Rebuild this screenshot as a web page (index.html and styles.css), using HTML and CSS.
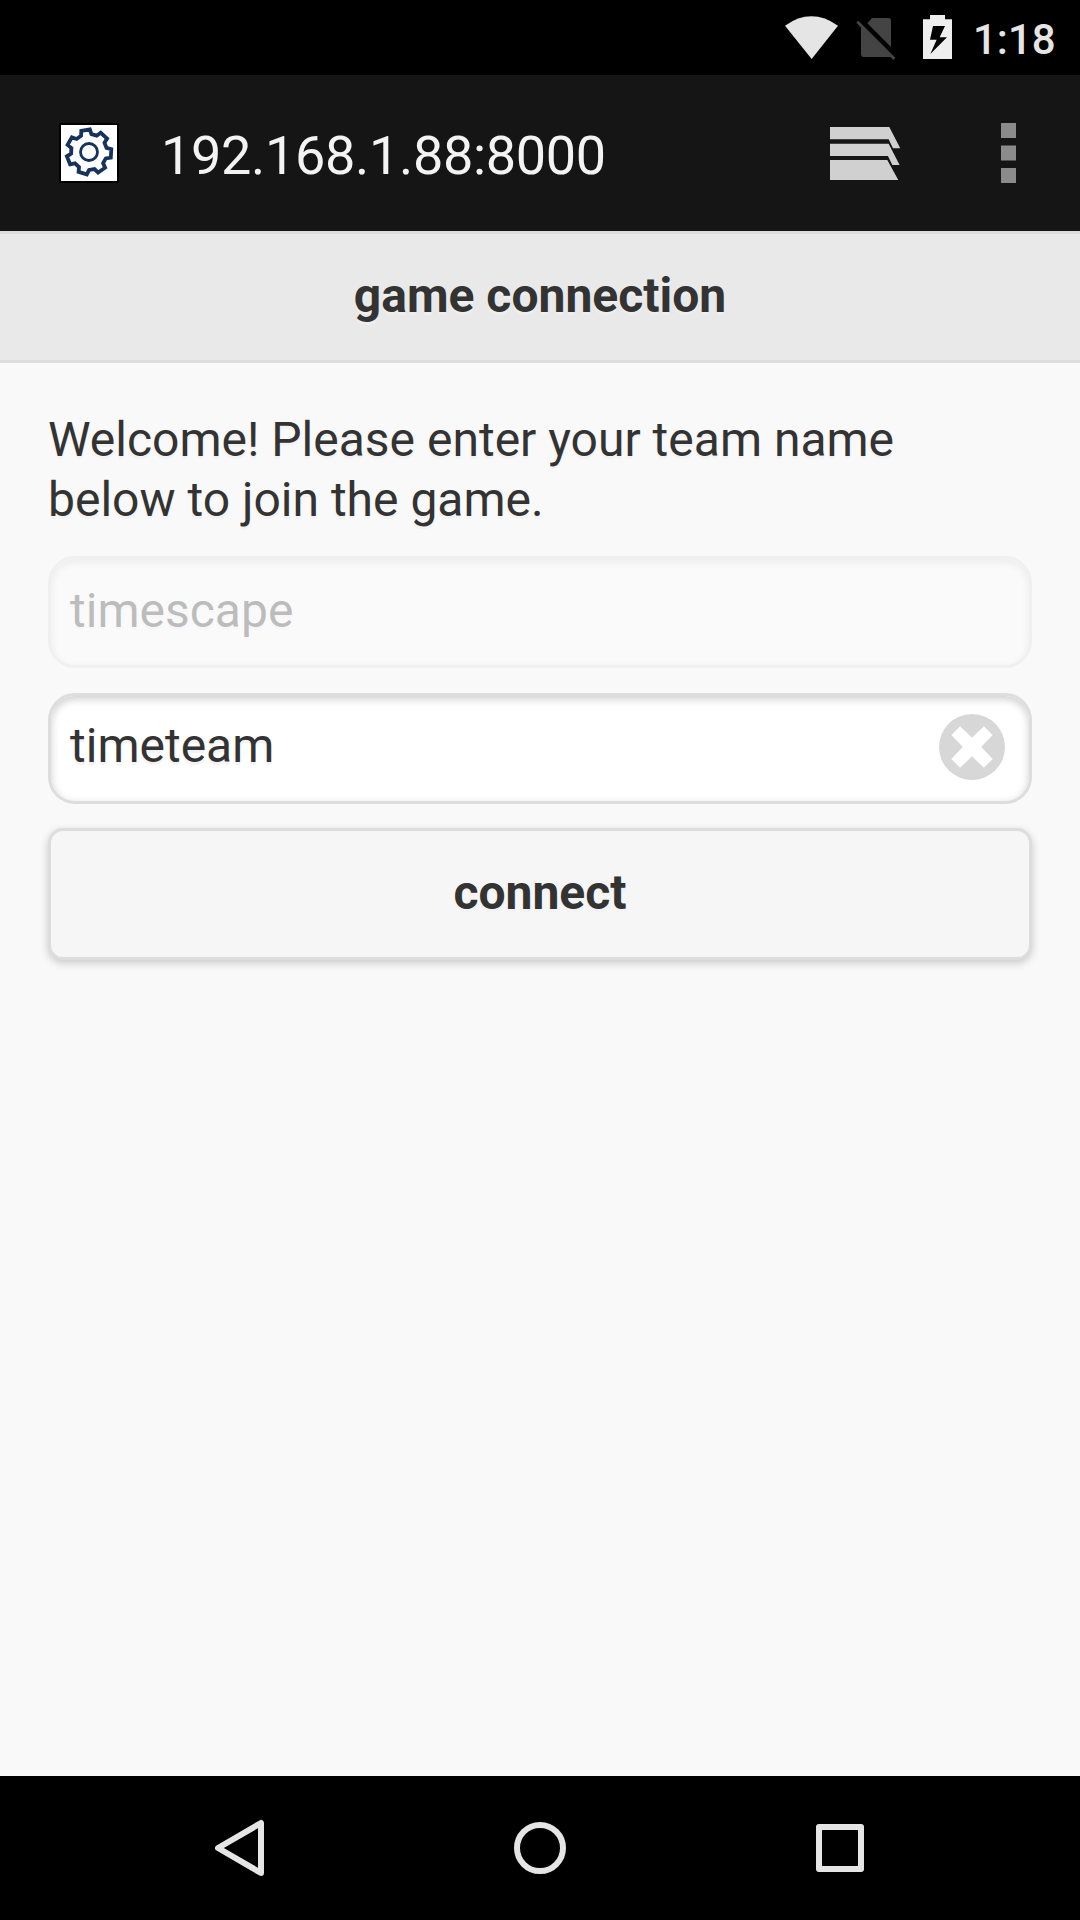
FILE: index.html
```html
<!DOCTYPE html>
<html lang="en">
<head>
<meta charset="utf-8">
<title>game connection</title>
<link rel="stylesheet" href="styles.css">
</head>
<body>
<div class="status">
  <svg class="wifi" viewBox="0 0 159 129"><path d="M0 29Q79 -27 159 29L80 129Z"/></svg>
  <svg class="sim" viewBox="0 0 120 120"><path d="M48 0H97Q105 0 105 8V87L34 16Z"/><path d="M7 8L118 119L112 126L1 14Z"/><path d="M15 26L106 117H25Q15 117 15 107Z"/></svg>
  <svg class="battery" viewBox="0 0 87 132"><path fill-rule="evenodd" d="M21 0H66V13H87V132H0V13H21ZM30 33L21 74H41L22 117L72 67H50L66 33Z"/></svg>
  <span class="clock">1:18</span>
</div>
<div class="toolbar">
  <svg class="favicon" viewBox="0 0 60 60"><path fill="#000" d="M0 0h60v60H0z"/><path fill="#fff" d="M2 2h56v56H2z"/><g fill="none" stroke="#17335b" stroke-width="3.8"><path d="M22.1 12.8L22.3 7.9L30.8 6.5L32.5 11.2L37.7 12.7L41.7 9.8L48.1 15.6L45.5 19.8L47.5 24.9L52.3 26.2L51.8 34.7L46.8 35.4L44.1 40.1L46.1 44.7L39.1 49.6L35.5 46.1L30.1 47L27.8 51.4L19.6 48.9L20 44L16 40.3L11.1 41.3L7.9 33.3L12.1 30.6L12.4 25.1L8.6 21.9L12.9 14.4L17.6 16Z"/><circle cx="30" cy="29" r="8.5" stroke-width="2.8"/></g></svg>
  <span class="url">192.168.1.88:8000</span>
  <svg class="tabs" viewBox="0 0 211 159"><path d="M0 0H178L211 64H189L176 37H0ZM0 50H176L209 114H187L174 87H0ZM0 99H172L205 159H0Z"/></svg>
  <svg class="more" viewBox="0 0 15 60"><path d="M0 0h15v15H0zM0 22.5h15v15H0zM0 45h15v15H0z"/></svg>
</div>
<header class="title">game connection</header>
<main class="content">
  <p class="intro">Welcome! Please enter your team name below to join the game.</p>
  <div class="field disabled">timescape</div>
  <div class="field team">timeteam
    <svg class="clear" viewBox="-33 -33 66 66"><circle r="33" fill="#d7d7d7"/><path fill="#fff" d="M-20.7-12L-11.9-20.8L0-9.2L11.9-20.8L20.7-12L9.2 0L20.7 12L11.9 20.8L0 9.2L-11.9 20.8L-20.7 12L-9.2 0Z"/></svg>
  </div>
  <button class="connect">connect</button>
</main>
<nav class="nav">
  <svg viewBox="0 0 60 60"><path d="M51 5V55L8 30Z"/></svg>
  <svg viewBox="0 0 60 60"><circle cx="30" cy="30" r="23"/></svg>
  <svg viewBox="0 0 60 60"><path d="M9 9H51V51H9Z"/></svg>
</nav>
</body>
</html>
```
FILE: styles.css
```css
* { box-sizing: border-box; }
body {
  margin: 0;
  width: 1080px;
  height: 1920px;
  display: flex;
  flex-direction: column;
  background: #f9f9f9;
  color: #333;
  font: 48px/60px Roboto, sans-serif;
  overflow: hidden;
}
svg { display: block; flex: none; }
.status {
  height: 75px;
  background: #000;
  display: flex;
  align-items: flex-start;
  padding-left: 785px;
  fill: #e5e5e5;
}
.wifi { width: 53px; height: 43px; margin-top: 16px; }
.sim { width: 40px; height: 40px; margin: 18px 0 0 18px; fill: #444; overflow: visible; }
.battery { width: 29px; height: 44px; margin: 15px 0 0 27px; fill: #eee; }
.clock {
  margin: 15px 0 0 21px;
  font-size: 42px;
  line-height: 50px;
  font-weight: 500;
  color: #e5e5e5;
}
.toolbar {
  height: 156px;
  background: #151515;
  display: flex;
  align-items: center;
  padding: 0 64px 0 59px;
}
.favicon { width: 60px; height: 60px; }
.url {
  flex: 1;
  margin-left: 42px;
  padding-top: 5px;
  font-size: 54px;
  letter-spacing: -.32px;
  color: #f3f3f3;
}
.tabs { width: 70.3px; height: 53px; fill: #d0d0d0; margin-right: 100.7px; }
.more { width: 15px; height: 60px; fill: #8b8b8b; }
.title {
  height: 132px;
  background: #e9e9e9;
  border: solid #ddd;
  border-width: 3px 0;
  line-height: 124px;
  text-align: center;
  font-weight: 700;
  text-shadow: 0 3px 0 #eee;
}
.content { flex: 1; padding: 47px 48px 0; }
.intro { margin: 0; text-shadow: 0 3px 0 #f3f3f3; height: 146px; width: 900px; }
.field {
  height: 112px;
  border: 3px solid #ddd;
  border-radius: 27px;
  background: #fff;
  box-shadow: inset 0 3px 9px rgba(0,0,0,.2);
  padding: 0 24px 2px 19px;
  line-height: 104px;
  text-shadow: 0 3px 0 #f3f3f3;
  display: flex;
  align-items: center;
  justify-content: space-between;
}
.disabled { opacity: .3; }
.team { height: 111px; margin-top: 25px; padding-bottom: 5px; }
.clear { width: 66px; height: 66px; margin-top: 2px; }
.connect {
  display: block;
  width: 984px;
  height: 132px;
  margin: 24px 0 0;
  padding: 0 0 2px;
  border: 3px solid #ddd;
  border-radius: 15px;
  background: #f6f6f6;
  box-shadow: 0 3px 9px rgba(0,0,0,.2);
  font: 700 48px/60px Roboto, sans-serif;
  color: #333;
  text-shadow: 0 3px 0 #f3f3f3;
}
.nav {
  height: 144px;
  background: #000;
  display: flex;
  justify-content: center;
  align-items: center;
  gap: 240px;
}
.nav svg { width: 60px; height: 60px; fill: none; stroke: #e5e5e5; stroke-width: 6; stroke-linejoin: round; }
```
